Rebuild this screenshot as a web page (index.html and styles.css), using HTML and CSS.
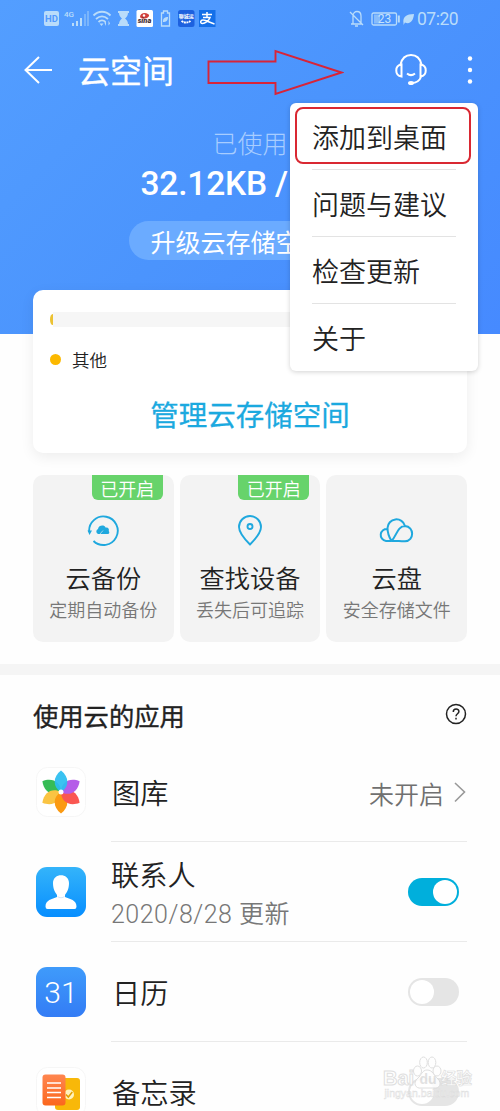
FILE: index.html
```html
<!DOCTYPE html>
<html lang="zh-CN">
<head>
<meta charset="utf-8">
<title>云空间</title>
<link rel="stylesheet" href="styles.css">
</head>
<body>
<main class="screen">
  <header class="hero">
    <div class="status">
      <svg class="status-left" width="174" height="20" viewBox="0 0 174 20">
        <g fill="#b9dcfa">
          <rect x="1" y="2" width="15" height="15" rx="2"/>
          <text x="8.5" y="13.2" class="hd">HD</text>
          <text x="21" y="8" class="net">4G</text>
          <rect x="29" y="14" width="2" height="3"/><rect x="33" y="12" width="2" height="5"/><rect x="37" y="9" width="2" height="8"/>
          <g opacity=".4"><rect x="41" y="5" width="2" height="12"/><rect x="44" y="2" width="2" height="15"/></g>
        </g>
        <g fill="none" stroke="#b9dcfa" stroke-width="1.8"><path d="M50.500 6.500c5-5 12-5 17 0M53 10c4-3.500 8-3.500 12 0M55.500 13c2-2 5-2 7 0"/></g>
        <path d="M56.500 14.500h4l-2 2.500zM63 17v-5l-1.500 2M65.500 11.500v5l1.500-2" fill="#b9dcfa"/>
        <path d="M75 2h11v2h-1c0 3-2 4.500-3 5.500 1 1 3 2.500 3 5.500h1v2H75v-2h1c0-3 2-4.500 3-5.500-1-1-3-2.500-3-5.500h-1z" fill="#b9dcfa"/>
        <rect x="93.500" y="1" width="16.500" height="17" rx="1.500" fill="#fff"/>
        <path d="M97 8c0-4 5-5 8-3 2 1 1 3-1 4-3 1-6 1-7-1z" fill="#d0413c"/><circle cx="101" cy="6.500" r="1.200" fill="#fff"/>
        <text x="101.500" y="13.500" class="sina">sina</text>
        <path d="M120.500 4v-2h4v2h2v13h-8V4z" fill="none" stroke="#b9dcfa" stroke-width="1.300"/><path d="M120 12c0-3 2-4 5-4 0 4-2 5-5 5z" fill="#b9dcfa"/>
        <rect x="135" y="1" width="16.500" height="17" rx="2.500" fill="#1d61df"/>
        <text x="143.200" y="9" class="tiny">聊城运</text><path d="M138.500 12q4.500 3 9 0" stroke="#fff" stroke-width="2" stroke-dasharray="2 .6" fill="none"/>
        <rect x="156" y="1" width="16.500" height="17" fill="#146fe8"/>
        <path d="M159 5.500h10M164 3v5.500M160 8.500h7c-1 3-5 6-7.500 6-3 0-2-4 1-3.500 3 .4 6 2.500 11 4" stroke="#fff" stroke-width="1.500" fill="none"/>
      </svg>
      <svg class="status-right" width="66" height="20" viewBox="0 0 66 20">
        <g fill="none" stroke="#b9dcfa" stroke-width="1.300">
          <path d="M2 15h11M4 14.500V7c0-6 8-6 8 0v7.500M6 17h3M1 3l13 13"/>
          <rect x="23" y="4" width="24.500" height="12" rx="1.500"/>
        </g>
        <rect x="25" y="5.500" width="6" height="9" fill="#b9dcfa" opacity=".55"/>
        <text x="35.500" y="14" class="battery">23</text>
        <path d="M48.800 6.500h2v7h-2z" fill="#b9dcfa"/>
        <path d="M54.500 14c-1-6 3-9 10.500-9C64.500 12 60.500 16 56 13.500L54.500 16z" fill="#b9dcfa"/>
      </svg>
      <span class="clock">07:20</span>
    </div>
    <nav class="titlebar">
      <svg class="back" width="28" height="28" viewBox="0 0 28 28"><path d="M15 1L1.500 14 15 27M1.500 14H28" fill="none" stroke="#fff" stroke-width="2"/></svg>
      <h1>云空间</h1>
      <svg class="pointer" width="137" height="48" viewBox="0 0 137 48"><path d="M1.500 13.500H68.500V3L134.500 24.500 68.500 46V35H1.500z" fill="none" stroke="#d82438" stroke-width="1.900"/></svg>
      <svg class="support" width="34" height="34" viewBox="0 0 34 34" fill="none" stroke="#fff" stroke-width="2">
        <path d="M6.500 11.500C8 5 12 2 17 2s9 3 10.500 9.500M27 24c-1.500 4-4 6-9.500 6"/>
        <path d="M7.500 11.500v12C.5 22.500.5 12.500 7.500 11.500zM26.500 11.500v12c7-1 7-11 0-12z"/>
        <path d="M13 20.500c2.500 2 5.500 2 8 0"/><ellipse cx="17" cy="30" rx="2" ry="1" fill="#fff"/>
      </svg>
      <svg class="more" width="6" height="30" viewBox="0 0 6 30" fill="#fff"><circle cx="3" cy="3.500" r="2.200"/><circle cx="3" cy="15" r="2.200"/><circle cx="3" cy="26.500" r="2.200"/></svg>
    </nav>
    <div class="usage">
      <span class="usage-label">已使用</span>
      <strong>32.12KB /</strong>
      <button class="upgrade">升级云存储空间</button>
    </div>
    <div class="menu">
      <div class="menu-item active">添加到桌面</div>
      <div class="menu-item">问题与建议</div>
      <div class="menu-item">检查更新</div>
      <div class="menu-item">关于</div>
    </div>
  </header>

  <section class="storage">
    <div class="bar"><i></i></div>
    <div class="legend"><i></i>其他</div>
    <a class="manage">管理云存储空间</a>
  </section>

  <section class="tiles">
    <article class="tile">
      <span class="badge">已开启</span>
      <svg width="34" height="34" viewBox="0 0 34 34"><path d="M7.500 28A14.300 14.300 0 1 0 3.200 19" fill="none" stroke="#1fa8de" stroke-width="1.900"/><path d="M1.500 17.500h4.500l-2.500 4.500zM12 21a2.700 2.700 0 0 1 0-5c.5-4 6.500-4.500 7.500-1.500 3-.5 4 2 3.200 3.500C24 19.500 23 21 22 21z" fill="#1fa8de"/><path d="M14 21l3-3.500" stroke="#f3f3f3" stroke-width=".6"/></svg>
      <b>云备份</b><small>定期自动备份</small>
    </article>
    <article class="tile">
      <span class="badge">已开启</span>
      <svg width="34" height="34" viewBox="0 0 34 34" fill="none" stroke="#1fa8de" stroke-width="1.900"><path d="M17 31.500C12 26.500 6 20 6 14a11 11 0 0 1 22 0c0 6-6 12.500-11 17.500z"/><circle cx="17" cy="13.500" r="2.500"/></svg>
      <b>查找设备</b><small>丢失后可追踪</small>
    </article>
    <article class="tile">
      <svg width="36" height="34" viewBox="0 0 36 34" fill="none" stroke="#1fa8de" stroke-width="2"><path d="M12.500 28C10 24 8.500 21 8.500 15a8.900 8.900 0 0 1 17.500-2M8.500 16a6 6 0 0 0-1.500 12h5.500M12.500 28C17.500 23 18.500 13 26 13c9.500.5 9.500 15 0 15.300-4.500.2-9-.8-13.500-.3"/></svg>
      <b>云盘</b><small>安全存储文件</small>
    </article>
  </section>

  <section class="apps">
    <div class="apps-head">
      <h2>使用云的应用</h2>
      <svg width="22" height="22" viewBox="0 0 22 22" fill="none" stroke="#222" stroke-width="1.500"><circle cx="11" cy="11" r="9.500"/><path d="M8.300 9c0-4 5.600-3.800 5.600-.4 0 2.200-2.900 2.200-2.900 4.700M11 14.800v1.600"/></svg>
    </div>
    <div class="row">
      <svg class="icon" width="50" height="50" viewBox="0 0 50 50">
        <rect x=".5" y=".5" width="49" height="49" rx="11" fill="#fff" stroke="#f6f6f6"/>
        <path d="M25 25C16.500 20 16.500 10 25 3.500c8.500 6.500 8.500 16.500 0 21.500z" fill="#36bc55" transform="rotate(300 25 25)"/>
        <path d="M25 25C16.500 20 16.500 10 25 3.500c8.500 6.500 8.500 16.500 0 21.500z" fill="#fac443" transform="rotate(240 25 25)"/>
        <path d="M25 25C16.500 20 16.500 10 25 3.500c8.500 6.500 8.500 16.500 0 21.500z" fill="#fb9a12" transform="rotate(180 25 25)"/>
        <path d="M25 25C16.500 20 16.500 10 25 3.500c8.500 6.500 8.500 16.500 0 21.500z" fill="#fa5752" transform="rotate(120 25 25)"/>
        <path d="M25 25C16.500 20 16.500 10 25 3.500c8.500 6.500 8.500 16.500 0 21.500z" fill="#b55de8" transform="rotate(60 25 25)"/>
        <path d="M25 25C16.500 20 16.500 10 25 3.500c8.500 6.500 8.500 16.500 0 21.500z" fill="#2bbdf0" opacity=".93"/>
        <circle cx="25" cy="25" r="2.500" fill="#fff"/>
      </svg>
      <div class="row-body"><div class="name">图库</div><span class="state">未开启</span>
        <svg width="13" height="22" viewBox="0 0 13 22"><path d="M1 2L10.500 11 1 20.500" fill="none" stroke="#999" stroke-width="1.600"/></svg></div>
    </div>
    <div class="row">
      <svg class="icon" width="50" height="50" viewBox="0 0 50 50">
        <defs><linearGradient id="contact" x2="0" y2="1"><stop stop-color="#34b4fa"/><stop offset="1" stop-color="#078eff"/></linearGradient></defs>
        <rect width="50" height="50" rx="11" fill="url(#contact)"/>
        <path d="M17 16c0-10.500 16-10.500 16 0 0 6-2 9-4 12v2c5 2 11.500 3 11.500 9.500q0 2.500-2 2.500h-27q-2 0-2-2.500C9.500 33 16 32 21 30v-2c-2-3-4-6-4-12z" fill="#fff"/>
        <path d="M21.500 29q3.500 2.500 7 0v1q-3.500 2.500-7 0z" fill="#d3e7fa"/>
      </svg>
      <div class="row-body"><div class="name detailed">联系人<span>2020/8/28 更新</span></div><i class="switch on"></i></div>
    </div>
    <div class="row">
      <div class="icon calendar">31</div>
      <div class="row-body"><div class="name">日历</div><i class="switch"></i></div>
    </div>
    <div class="row">
      <svg class="icon" width="50" height="50" viewBox="0 0 50 50">
        <defs><linearGradient id="memo" x2="0" y2="1"><stop stop-color="#ff8650"/><stop offset="1" stop-color="#fb671d"/></linearGradient></defs>
        <rect x=".5" y=".5" width="49" height="49" rx="11" fill="#fff" stroke="#f6f6f6"/>
        <rect x="19" y="11" width="25" height="32" rx="3" fill="#f8b809"/>
        <circle cx="33" cy="27.500" r="5" fill="#fff2bd"/><path d="M30 27.500l2.300 2.500 4-5" stroke="#e2a000" stroke-width="1.500" fill="none"/>
        <rect x="6.500" y="7.500" width="23" height="31" rx="3" fill="url(#memo)"/>
        <path d="M11 16h14M11 21h14M11 25.500h14M11 30.500h14" stroke="#fff" stroke-width="1.500"/>
      </svg>
      <div class="row-body"><div class="name">备忘录</div><i class="switch"></i></div>
    </div>
  </section>

  <svg class="watermark" width="96" height="56" viewBox="0 0 96 56">
    <g fill="#fff" stroke="#dadada" stroke-width="1">
      <path d="M46 20c-5 0-6 6-9 8-6 5-2 11 3 10h13c6 1 8-5 4-9-4-3-5-9-11-9z"/>
      <ellipse cx="36.500" cy="21" rx="4" ry="5"/><ellipse cx="42.500" cy="12.500" rx="3.800" ry="5.500"/><ellipse cx="51" cy="12.500" rx="3.800" ry="5.500"/><ellipse cx="56" cy="21" rx="4" ry="5"/>
      <text x="2" y="35" class="wm-main">Bai</text><text x="38.500" y="34" class="wm-du">du</text>
      <text x="60" y="34" class="wm-cn">经验</text>
      <text x="3.500" y="47" class="wm-url">jingyan.baidu.com</text>
    </g>
  </svg>
</main>
</body>
</html>
```
FILE: styles.css
```css
*, *::before, *::after { box-sizing: border-box; }
body { margin: 0; background: #fff; }
.screen {
  position: relative; width: 500px; height: 1111px; overflow: hidden;
  background: #fefefe; color: #222;
  font-family: Roboto, "Noto Sans CJK SC", sans-serif; font-weight: 350;
}
h1, h2 { margin: 0; }
i { font-style: normal; }
svg { display: block; flex: none; }

.hero {
  position: relative; height: 334px;
  background: linear-gradient(135deg, #539eff 0%, #4b94fd 50%, #468aff 100%);
}
.status { display: flex; align-items: center; height: 38px; padding: 0 41px 0 43px; color: #b9dcfa; }
.status-right { margin-left: auto; }
.clock { margin-left: 2px; font-size: 17.5px; line-height: 20px; font-weight: 400; width: 42px; letter-spacing: -.5px; }
.hd { font: 700 9.500px Roboto; text-anchor: middle; fill: #519aff; }
.net { font: 500 8px Roboto; }
.sina { font: italic 900 7.500px Roboto; text-anchor: middle; fill: #453036; }
.tiny { font: 700 5px "Noto Sans CJK SC"; text-anchor: middle; fill: #fff; }
.battery { font: 400 12px Roboto; text-anchor: middle; fill: #c7e3fb; }

.titlebar { display: flex; align-items: center; height: 64px; padding: 0 27px 0 24px; }
.titlebar h1 { margin: 4px 0 0 26px; color: #fff; font-size: 32px; font-weight: 400; line-height: 40px; width: 96px; -webkit-text-stroke: .3px #fff; }
.pointer { margin-left: 33px; margin-top: 4px; }
.support { margin-left: 50px; }
.more { margin-left: auto; }

.usage { display: flex; flex-direction: column; align-items: center; padding-top: 28px; color: #fff; }
.usage-label { font-size: 25px; line-height: 30px; color: #a8cdff; font-weight: 300; }
.usage strong { font-size: 33.500px; font-weight: 500; line-height: 40px; margin-top: 4px; width: 219px; letter-spacing: -.2px; white-space: nowrap; }
.upgrade {
  margin-top: 17px; width: 243px; height: 39px; padding: 0; border: 0; border-radius: 20px;
  background: #6babff; color: #fff; font: 400 25px/41px "Noto Sans CJK SC", sans-serif;
  text-align: left; padding-left: 22px;
}

.menu {
  position: absolute; z-index: 2; left: 290px; top: 103px; width: 188px; height: 268px;
  padding: 0 22px; border-radius: 6px; background: #fff; box-shadow: 0 1px 5px rgba(0,0,0,.18);
}
.menu-item { position: relative; height: 67px; font-size: 27px; line-height: 73px; border-bottom: 1px solid #e3e3e3; }
.menu-item:last-child { border: 0; }
.menu-item.active::after {
  content: ""; position: absolute; left: -17px; top: 4px; width: 176px; height: 57px;
  border: 2px solid #d92832; border-radius: 8px;
}

.storage {
  position: relative; width: 434px; height: 163px; margin: -44px 0 0 33px; padding: 22px 17px 0;
  border-radius: 10px; background: #fff; box-shadow: 0 4px 14px rgba(0,0,0,.07);
}
.bar { display: flex; height: 15px; padding-left: 3px; background: linear-gradient(#f6f6f6, #f6f6f6) content-box; }
.bar i { width: 3px; height: 11px; margin: 2px 0 0 -3px; background: #ecc233; border-radius: 3px 0 0 3px / 6px 0 0 6px; }
.legend { display: flex; align-items: center; gap: 11px; height: 26px; margin-top: 19px; font-size: 17.500px; }
.legend i { width: 11px; height: 11px; border-radius: 50%; background: #fcb900; }
.manage { display: block; margin-top: 26px; text-align: center; font-size: 28.500px; line-height: 38px; font-weight: 400; color: #1ba9df; -webkit-text-stroke: .3px #1ba9df; }

.tiles { display: grid; grid-template-columns: repeat(3, 1fr); gap: 6px; padding: 22px 33px 22px; }
.tile { position: relative; display: flex; flex-direction: column; align-items: center; height: 167px; padding-top: 38px; border-radius: 10px; background: #f3f3f3; }
.tile b { margin-top: 15px; font-size: 25.200px; line-height: 36px; font-weight: inherit; }
.tile small { font-size: 18px; line-height: 26px; color: #777; }
.badge { position: absolute; right: 11px; top: 0; width: 71px; height: 25px; border-radius: 0 0 6px 6px; background: #67d36b; color: #fff; font-size: 18px; line-height: 30px; text-align: center; }

.apps { border-top: 11px solid #f5f5f5; padding: 0 33px; }
.apps-head { display: flex; align-items: center; justify-content: space-between; height: 67px; }
.apps-head svg { margin-top: 11px; }
.apps-head h2 { margin-top: 18px; font-size: 25.300px; line-height: 36px; font-weight: 400; -webkit-text-stroke: .35px #222; }
.row { display: flex; align-items: center; height: 100px; gap: 25px; padding-left: 3px; }
.icon { width: 50px; height: 50px; flex: none; }
.row-body { flex: 1; height: 100px; display: flex; align-items: center; border-bottom: 1px solid #eaeaea; }
.name { flex: 1; padding: 6px 0 0 1px; font-size: 28.200px; line-height: 38px; }
.name.detailed { padding: 9px 0 0; }
.name span { display: block; font-size: 25px; line-height: 38px; letter-spacing: .5px; color: #777; }
.state { margin: 2px 10px 0 0; font-size: 25px; color: #707070; }
.calendar { border-radius: 11px; background: linear-gradient(#3f9bfb, #337cf5); color: #fff; text-align: center; font-size: 30px; font-weight: 300; line-height: 51px; }
.switch { width: 51px; height: 28px; margin-right: 8px; padding: 2px; border-radius: 14px; background: #e5e5e5; }
.switch::before { content: ""; display: block; width: 24px; height: 24px; border-radius: 50%; background: #fff; }
.switch.on { background: #00afdc; }
.switch.on::before { margin-left: auto; }

.watermark { position: absolute; left: 381px; top: 1050px; opacity: .85; }
.wm-main { font: 700 20px "Liberation Sans"; }
.wm-du { font: 700 14px "Liberation Sans"; fill: #ddd; stroke: none; }
.wm-cn { font: 700 15.500px "Noto Sans CJK SC"; stroke-width: .7px; }
.wm-url { font: 400 10.500px "Liberation Sans"; stroke-width: .5px; }
```
